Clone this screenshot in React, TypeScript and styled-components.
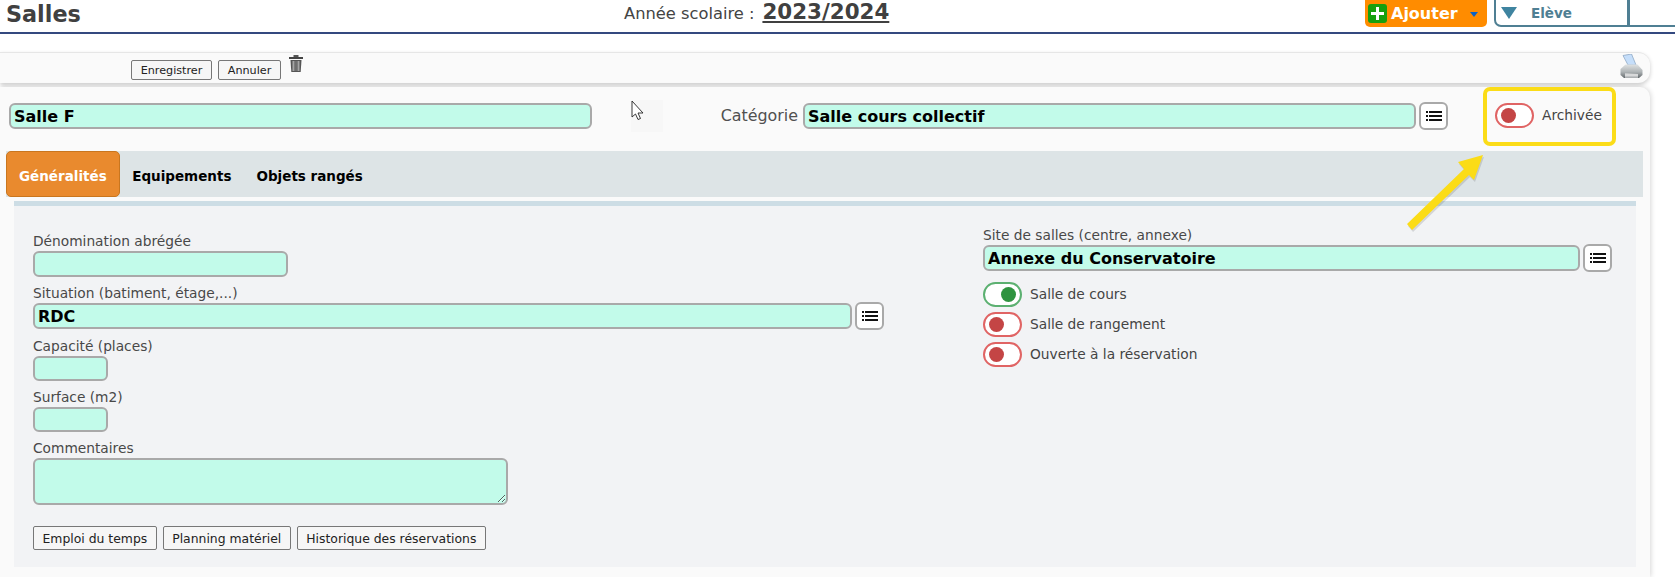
import React from "react";
import styled, { createGlobalStyle } from "styled-components";

const Global = createGlobalStyle`
  html, body { margin: 0; padding: 0; background: #fff; }
  * { box-sizing: border-box; }
  body { font-family: "DejaVu Sans", Verdana, sans-serif; color: #404040; }
`;

const Page = styled.div`
  position: relative;
  width: 1675px;
  height: 577px;
  overflow: hidden;
  background: #fff;
`;

const Header = styled.header`
  display: flex;
  height: 34px;
  border-bottom: 2px solid #34497f;
`;
const Title = styled.h1`
  margin: 1px 0 0 6px;
  width: 618px;
  font-size: 22.3px;
  line-height: 26px;
  font-weight: 700;
  color: #404040;
`;
const Year = styled.div`
  display: flex;
  align-items: baseline;
  gap: 8px;
  height: 23px;
  font-size: 16.3px;
  line-height: 23px;
  color: #444;
`;
const YearValue = styled.span`
  font-size: 21.4px;
  font-weight: 700;
  text-decoration: underline;
  color: #404040;
`;
const HeaderRight = styled.div`
  display: flex;
  margin-left: auto;
  align-items: flex-start;
`;
const AddButton = styled.div`
  display: flex;
  align-items: center;
  width: 122px;
  height: 27px;
  padding-left: 3px;
  background: #ff8c00;
  border-radius: 0 0 5px 5px;
  color: #fff;
  font-size: 16px;
  font-weight: 700;
`;
const PlusBox = styled.span`
  display: flex;
  width: 19px;
  height: 19px;
  margin-right: 4px;
  background: #17a00e;
  border-radius: 3px;
  align-items: center;
  justify-content: center;
`;
const Caret = styled.span`
  width: 0;
  height: 0;
  margin-left: 12px;
  margin-top: 2px;
  border-left: 4px solid transparent;
  border-right: 4px solid transparent;
  border-top: 5px solid #0b62c4;
`;
const PickerMain = styled.div`
  display: flex;
  align-items: center;
  width: 136px;
  height: 27px;
  margin-left: 7px;
  padding-left: 5px;
  border: 2px solid #4f7f93;
  border-top: 0;
  border-right-width: 3px;
  border-radius: 0 0 0 7px;
  color: #4f7f93;
  font-size: 13.5px;
  font-weight: 700;
`;
const PickerRest = styled.div`
  width: 45px;
  height: 27px;
  border-bottom: 2px solid #4f7f93;
`;
const PickerTriangle = styled.span`
  width: 0;
  height: 0;
  margin-right: 14px;
  border-left: 8px solid transparent;
  border-right: 8px solid transparent;
  border-top: 12px solid #3f84a0;
`;

const Toolbar = styled.div`
  display: flex;
  align-items: flex-start;
  width: 1650px;
  height: 31px;
  margin-top: 18px;
  padding: 7px 7px 0 131px;
  background: #fafafa;
  border-top: 1px solid #e6e6e6;
  border-radius: 0 12px 12px 0;
  box-shadow: 0 2px 4px rgba(0, 0, 0, 0.2);
`;
const SmallButton = styled.button<{ $w: number }>`
  height: 20px;
  padding: 0;
  width: ${(p) => p.$w}px;
  margin-right: 6px;
  background: #f6f6f6;
  border: 1px solid #777;
  border-radius: 2px;
  font-family: inherit;
  font-size: 11.2px;
  color: #222;
`;
const TrashWrap = styled.span`
  display: block;
  margin: -5px 0 0 2px;
  height: 17px;
`;
const PrinterWrap = styled.span`
  display: block;
  margin: -6px 0 0 auto;
`;

const Panel = styled.main`
  width: 1650px;
  height: 490px;
  margin-top: 4px;
  background: #fafafa;
  border-radius: 0 10px 0 0;
  box-shadow: 1px 0 5px rgba(0, 0, 0, 0.16);
`;
const TopRow = styled.div`
  display: flex;
  align-items: flex-start;
  height: 64px;
  padding: 16px 0 0 9px;
`;
const Field = styled.div<{ $w?: number; $h?: number }>`
  width: ${(p) => (p.$w ? `${p.$w}px` : "auto")};
  height: ${(p) => p.$h ?? 26}px;
  padding-left: 3px;
  background: #c2fbea;
  border: 2px solid #a9a9a9;
  border-radius: 6px;
  color: #000;
  font-size: 16px;
  font-weight: 700;
  line-height: 23px;
  white-space: nowrap;
`;
const CategoryLabel = styled.label`
  width: 206px;
  margin-right: 5px;
  text-align: right;
  font-size: 15.9px;
  line-height: 26px;
  color: #505050;
`;
const ListButton = styled.span<{ $ml?: number }>`
  display: flex;
  align-items: center;
  justify-content: center;
  width: 29px;
  height: 28px;
  margin: -1px 0 0 ${(p) => p.$ml ?? 3}px;
  background: #fff;
  border: 2px solid #a9a9a9;
  border-radius: 6px;
`;
const Toggle = styled.span<{ $on?: boolean }>`
  display: flex;
  flex: none;
  align-items: center;
  justify-content: ${(p) => (p.$on ? "flex-end" : "flex-start")};
  width: 39px;
  height: 25px;
  padding: 0 4px;
  background: #fff;
  border: 2px solid ${(p) => (p.$on ? "#5cb071" : "#e06464")};
  border-radius: 13px;
  &::after {
    content: "";
    width: 15px;
    height: 15px;
    border-radius: 50%;
    background: ${(p) => (p.$on ? "#2f9340" : "#c44545")};
  }
`;
const ToggleRow = styled.div<{ $ml?: number }>`
  display: flex;
  align-items: center;
  gap: 8px;
  margin-left: ${(p) => p.$ml ?? 0}px;
  height: 25px;
  font-size: 13.75px;
  line-height: 23px;
  color: #444;
`;

const TabBar = styled.nav`
  display: flex;
  height: 46px;
  margin: 0 7px 0 6px;
  background: #dde4e6;
`;
const Tab = styled.div<{ $active?: boolean }>`
  display: flex;
  align-items: center;
  padding: ${(p) => (p.$active ? "3px 12px 0" : "3px 12.5px 0")};
  background: ${(p) => (p.$active ? "#e98a2e" : "transparent")};
  border: ${(p) => (p.$active ? "1px solid #c9761f" : "0")};
  border-radius: ${(p) => (p.$active ? "5px" : "0")};
  color: ${(p) => (p.$active ? "#fff" : "#000")};
  font-size: 13.5px;
  font-weight: 700;
`;
const Body = styled.section`
  display: flex;
  width: 1622px;
  height: 366px;
  margin: 4px 0 0 14px;
  background: #f2f3f5;
  border-top: 5px solid #cddde5;
`;
const LeftCol = styled.div`
  width: 969px;
  padding: 25px 0 0 19px;
`;
const RightCol = styled.div`
  flex: 1;
  padding: 19px 0 0 0;
`;
const Label = styled.label`
  display: block;
  font-size: 13.75px;
  line-height: 20px;
  color: #484848;
`;
const Group = styled.div`
  margin-bottom: 6px;
`;
const InputLine = styled.div`
  display: flex;
  align-items: flex-start;
`;
const Comments = styled.textarea`
  display: block;
  width: 475px;
  height: 47px;
  background: #c2fbea;
  border: 2px solid #a9a9a9;
  border-radius: 6px;
  outline: none;
`;
const ActionRow = styled.div`
  display: flex;
  gap: 6px;
  margin-top: 21px;
`;
const ActionButton = styled.button`
  height: 24px;
  padding: 0 8.5px;
  background: #f6f6f6;
  border: 1px solid #777;
  border-radius: 2px;
  font-family: inherit;
  font-size: 12.4px;
  color: #222;
`;
const Toggles = styled.div`
  display: flex;
  flex-direction: column;
  gap: 5px;
  margin-top: 10px;
`;

const Highlight = styled.div`
  position: absolute;
  left: 1483px;
  top: 87px;
  width: 133px;
  height: 59px;
  border: 4px solid #fbdc17;
  border-radius: 7px;
`;
const Overlay = styled.svg`
  position: absolute;
  left: 0;
  top: 0;
  pointer-events: none;
`;

const ListIcon = () => (
  <svg width="16" height="12" viewBox="0 0 16 12" fill="#111">
    <rect x="0" y="1" width="2" height="2" />
    <rect x="3" y="1" width="13" height="2" />
    <rect x="0" y="5" width="2" height="2" />
    <rect x="3" y="5" width="13" height="2" />
    <rect x="0" y="9" width="2" height="2" />
    <rect x="3" y="9" width="13" height="2" />
  </svg>
);

const TrashIcon = () => (
  <svg width="14" height="17" viewBox="0 0 14 17">
    <rect x="4.5" y="0" width="5" height="2" fill="#555" />
    <rect x="0" y="2" width="14" height="2" fill="#444" />
    <path d="M1.5 5h11l-.8 12H2.3z" fill="#555" />
    <rect x="3.5" y="6" width="2" height="10" fill="#a5a5a5" />
    <rect x="6.5" y="6" width="1" height="10" fill="#888" />
    <rect x="8.5" y="6" width="2" height="10" fill="#a5a5a5" />
  </svg>
);

const PrinterIcon = () => (
  <svg width="23" height="25" viewBox="0 0 23 25">
    <defs>
      <linearGradient id="printerBody" x1="0" y1="0" x2="0" y2="1">
        <stop offset="0" stopColor="#dfe2e3" />
        <stop offset="0.55" stopColor="#aeb3b5" />
        <stop offset="1" stopColor="#63696c" />
      </linearGradient>
    </defs>
    <path d="M3 1.5l8.5-1.5 4.5 11H8z" fill="#c5defa" stroke="#8fa8c4" strokeWidth="0.8" />
    <path d="M0.5 15l5-4.5h12l5 5.5v5l-3.5 3H4l-3.5-3z" fill="url(#printerBody)" />
    <path d="M5 19.5l13 0.5 0 3.5H5z" fill="#f2f2f2" />
    <path d="M5 21h13M5 22.5h13" stroke="#9aa0a3" strokeWidth="0.6" />
  </svg>
);

export default function App() {
  return (
    <Page>
      <Global />
      <Header>
        <Title>Salles</Title>
        <Year>
          Année scolaire :<YearValue>2023/2024</YearValue>
        </Year>
        <HeaderRight>
          <AddButton>
            <PlusBox>
              <svg width="13" height="13" viewBox="0 0 13 13">
                <path d="M5 0h3v5h5v3H8v5H5V8H0V5h5z" fill="#fff" />
              </svg>
            </PlusBox>
            Ajouter
            <Caret />
          </AddButton>
          <PickerMain>
            <PickerTriangle />
            Elève
          </PickerMain>
          <PickerRest />
        </HeaderRight>
      </Header>

      <Toolbar>
        <SmallButton $w={81}>Enregistrer</SmallButton>
        <SmallButton $w={63}>Annuler</SmallButton>
        <TrashWrap>
          <TrashIcon />
        </TrashWrap>
        <PrinterWrap>
          <PrinterIcon />
        </PrinterWrap>
      </Toolbar>

      <Panel>
        <TopRow>
          <Field $w={583}>Salle F</Field>
          <CategoryLabel>Catégorie</CategoryLabel>
          <Field $w={613}>Salle cours collectif</Field>
          <ListButton>
            <ListIcon />
          </ListButton>
          <ToggleRow $ml={47}>
            <Toggle />
            Archivée
          </ToggleRow>
        </TopRow>

        <TabBar>
          <Tab $active>Généralités</Tab>
          <Tab>Equipements</Tab>
          <Tab>Objets rangés</Tab>
        </TabBar>

        <Body>
          <LeftCol>
            <Group>
              <Label>Dénomination abrégée</Label>
              <Field $w={255} />
            </Group>
            <Group>
              <Label>Situation (batiment, étage,...)</Label>
              <InputLine>
                <Field $w={819}>RDC</Field>
                <ListButton>
                  <ListIcon />
                </ListButton>
              </InputLine>
            </Group>
            <Group>
              <Label>Capacité (places)</Label>
              <Field $w={75} $h={25} />
            </Group>
            <Group>
              <Label>Surface (m2)</Label>
              <Field $w={75} $h={25} />
            </Group>
            <Group>
              <Label>Commentaires</Label>
              <Comments readOnly />
            </Group>
            <ActionRow>
              <ActionButton>Emploi du temps</ActionButton>
              <ActionButton>Planning matériel</ActionButton>
              <ActionButton>Historique des réservations</ActionButton>
            </ActionRow>
          </LeftCol>
          <RightCol>
            <Label>Site de salles (centre, annexe)</Label>
            <InputLine>
              <Field $w={597}>Annexe du Conservatoire</Field>
              <ListButton>
                <ListIcon />
              </ListButton>
            </InputLine>
            <Toggles>
              <ToggleRow>
                <Toggle $on />
                Salle de cours
              </ToggleRow>
              <ToggleRow>
                <Toggle />
                Salle de rangement
              </ToggleRow>
              <ToggleRow>
                <Toggle />
                Ouverte à la réservation
              </ToggleRow>
            </Toggles>
          </RightCol>
        </Body>
      </Panel>

      <Highlight />
      <Overlay width="1675" height="577" viewBox="0 0 1675 577">
        <polygon points="1483,155 1458,162 1464,169 1407,224 1412,230 1469,175 1474,180" fill="rgba(0,0,0,0.12)" transform="translate(1 2)" />
        <polygon points="1483,155 1458,162 1464,169 1407,224 1412,230 1469,175 1474,180" fill="#fbdc17" />
        <rect x="631" y="100" width="32" height="32" fill="#f7f7f7" />
        <path d="M632 101v16l3.5-3 2.5 5.5 2.5-1-2.5-5.5h5z" fill="#fff" stroke="#222" strokeWidth="0.9" />
      </Overlay>
    </Page>
  );
}
